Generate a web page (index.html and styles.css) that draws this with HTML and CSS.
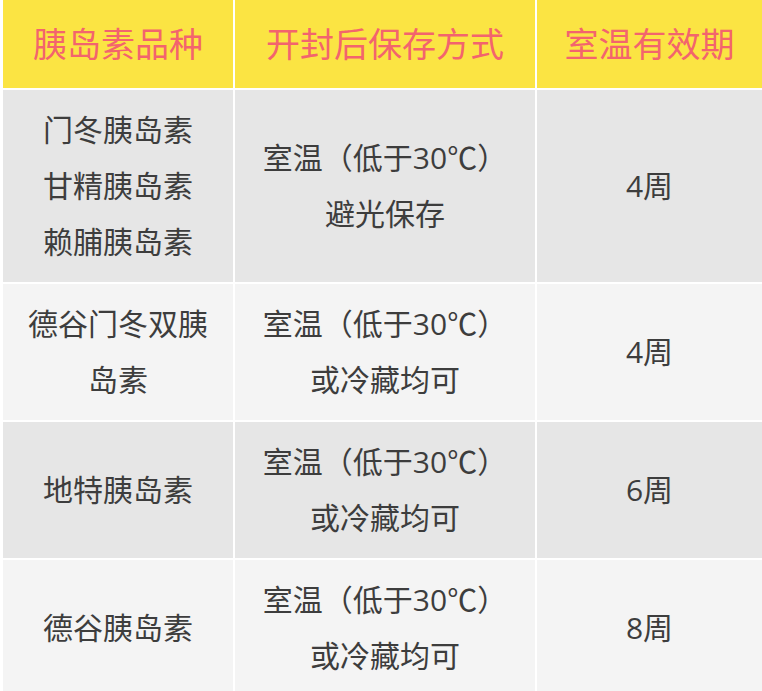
FILE: index.html
```html
<!DOCTYPE html>
<html lang="zh">
<head>
<meta charset="utf-8">
<link rel="stylesheet" href="styles.css">
</head>
<body>
<table class="insulin">
  <colgroup>
    <col class="c1"><col class="c2"><col class="c3">
  </colgroup>
  <thead>
    <tr><th>胰岛素品种</th><th>开封后保存方式</th><th>室温有效期</th></tr>
  </thead>
  <tbody>
    <tr class="r-tall">
      <td>门冬胰岛素<br>甘精胰岛素<br>赖脯胰岛素</td>
      <td>室温（低于30℃）<br>避光保存</td>
      <td>4周</td>
    </tr>
    <tr class="r-std">
      <td>德谷门冬双胰<br>岛素</td>
      <td>室温（低于30℃）<br>或冷藏均可</td>
      <td>4周</td>
    </tr>
    <tr class="r-std">
      <td>地特胰岛素</td>
      <td>室温（低于30℃）<br>或冷藏均可</td>
      <td>6周</td>
    </tr>
    <tr class="r-std">
      <td>德谷胰岛素</td>
      <td>室温（低于30℃）<br>或冷藏均可</td>
      <td>8周</td>
    </tr>
  </tbody>
</table>
</body>
</html>
```
FILE: styles.css
```css
html, body {
  margin: 0;
  padding: 0;
  background: #ffffff;
}
body {
  padding-left: 3px;
  font-family: "Open Sans", "Noto Sans CJK SC", sans-serif;
}
.insulin {
  border-collapse: separate;
  border-spacing: 0;
  table-layout: fixed;
  width: 759px;
}
.c1 { width: 232px; }
.c2 { width: 302px; }
.c3 { width: 225px; }
.insulin th,
.insulin td {
  padding: 0;
  text-align: center;
  vertical-align: middle;
  border-right: 2px solid #ffffff;
  border-bottom: 2px solid #ffffff;
}
.insulin th:last-child,
.insulin td:last-child {
  border-right: 0;
}
.insulin th {
  background: #fbe443;
  color: #f3646d;
  font-weight: normal;
  font-size: 34px;
  height: 88px;
  line-height: 40px;
}
.insulin td {
  color: #3d3d3d;
  font-size: 30px;
  line-height: 56px;
}
.insulin tbody tr:nth-child(odd) td { background: #e6e6e6; }
.insulin tbody tr:nth-child(even) td { background: #f4f4f4; }
.r-tall td { height: 192px; }
.r-std td { height: 136px; }
```
